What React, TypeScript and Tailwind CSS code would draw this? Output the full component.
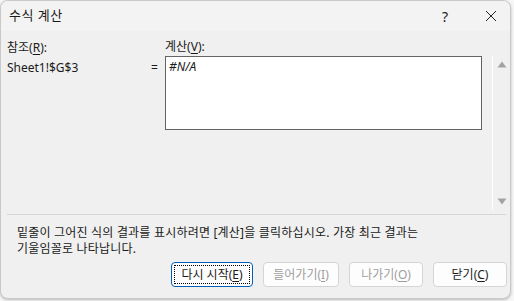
const FONT = { fontFamily: '"Segoe UI", "Noto Sans", "Noto Sans CJK KR", sans-serif' }

function Btn({ label, acc, disabled, focused }: { label: string; acc: string; disabled?: boolean; focused?: boolean }) {
  return (
    <div
      className={`h-[25px] rounded-[4px] border flex items-center justify-center text-[12px] ${
        focused ? 'border-[#005fb8] bg-[#fdfdfd] p-[2px]' : 'border-[#d5d5d5] bg-[#fdfdfd]'
      } ${disabled ? 'text-[#9d9d9d]' : 'text-[#1a1a1a]'}`}
    >
      <div className={`w-full h-full flex items-center justify-center ${focused ? 'border border-dotted border-black' : ''}`}>
        {label}(<span className="underline underline-offset-2">{acc}</span>)
      </div>
    </div>
  )
}

export default function App() {
  return (
    <div className="w-[514px] h-[301px] bg-[#f7f7f7] overflow-hidden" style={FONT}>
      <div className="w-[511px] h-[299px] bg-[#f0f0f0] rounded-[8px] border border-[#c9c9c9] shadow-[0_1px_3px_rgba(0,0,0,0.25)] flex flex-col overflow-hidden">
        {/* Title bar */}
        <div className="h-[30px] bg-[#f3f3f3] flex items-center pl-[8px] text-[13px] text-[#1a1a1a]">
          <span className="flex-1 tracking-[0.5px]">수식 계산</span>
          <span className="w-[20px] text-center text-[14px] mr-[30px]">?</span>
          <svg width="12" height="12" viewBox="0 0 12 12" className="mr-[13px]">
            <path d="M1 1L11 11M11 1L1 11" stroke="#222" strokeWidth="1" />
          </svg>
        </div>

        {/* Body */}
        <div className="flex-1 flex flex-col pl-[6px] pr-[3px] text-[12px] text-[#1a1a1a]">
          <div className="flex pt-[7px]">
            <div className="w-[144px] pt-[1px]">
              <div className="h-[17px] leading-[17px]">
                참조(<span className="underline underline-offset-2">R</span>):
              </div>
              <div className="mt-[3px] leading-[17px]">Sheet1!$G$3</div>
            </div>
            <div className="w-[14px] pt-[21px] leading-[17px]">=</div>
            <div className="flex flex-col">
              <div className="h-[18px] leading-[17px]">
                계산(<span className="underline underline-offset-2">V</span>):
              </div>
              <div className="w-[317px] h-[74px] bg-white border-[1.5px] border-[#646464] px-[3px] pt-[1px] italic leading-[17px]">
                #N/A
              </div>
            </div>
            <div className="ml-[10px] mt-[18px] w-[1px] h-[154px] bg-white" />
            <div className="ml-[4px] mt-[18px] h-[154px] flex flex-col justify-between py-[5px]">
              <svg width="10" height="7" viewBox="0 0 10 7">
                <path d="M5 0.5L9.5 6.5H0.5Z" fill="#a3a3a3" />
              </svg>
              <svg width="10" height="7" viewBox="0 0 10 7">
                <path d="M0.5 0.5H9.5L5 6.5Z" fill="#a3a3a3" />
              </svg>
            </div>
          </div>

          <div className="mt-[4px] mr-[1px] h-[1px] bg-[#d6d6d6]" />

          <div className="pl-[10px] pt-[10px] leading-[16px] tracking-[0.2px]">
            <div>밑줄이 그어진 식의 결과를 표시하려면 [계산]을 클릭하십시오. 가장 최근 결과는</div>
            <div>기울임꼴로 나타납니다.</div>
          </div>

          <div className="flex justify-end gap-[10px] pt-[5px]">
            <div className="w-[82px]">
              <Btn label="다시 시작" acc="E" focused />
            </div>
            <div className="w-[76px]">
              <Btn label="들어가기" acc="I" disabled />
            </div>
            <div className="w-[74px]">
              <Btn label="나가기" acc="O" disabled />
            </div>
            <div className="w-[74px]">
              <Btn label="닫기" acc="C" />
            </div>
          </div>
        </div>
      </div>
    </div>
  )
}
